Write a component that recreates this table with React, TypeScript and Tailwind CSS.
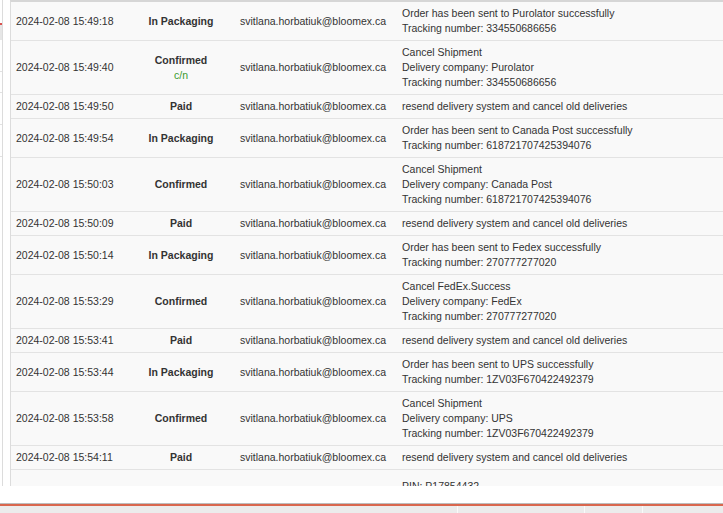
import React from "react";

type Row = { date: string; status: string; extra?: string; msg: string[]; email?: string; last?: boolean };

const EMAIL = "svitlana.horbatiuk@bloomex.ca";
const RESEND = ["resend delivery system and cancel old deliveries"];

const rows: Row[] = [
  { date: "2024-02-08 15:49:18", status: "In Packaging", msg: ["Order has been sent to Purolator successfully", "Tracking number: 334550686656"] },
  { date: "2024-02-08 15:49:40", status: "Confirmed", extra: "c/n", msg: ["Cancel Shipment", "Delivery company: Purolator", "Tracking number: 334550686656"] },
  { date: "2024-02-08 15:49:50", status: "Paid", msg: RESEND },
  { date: "2024-02-08 15:49:54", status: "In Packaging", msg: ["Order has been sent to Canada Post successfully", "Tracking number: 618721707425394076"] },
  { date: "2024-02-08 15:50:03", status: "Confirmed", msg: ["Cancel Shipment", "Delivery company: Canada Post", "Tracking number: 618721707425394076"] },
  { date: "2024-02-08 15:50:09", status: "Paid", msg: RESEND },
  { date: "2024-02-08 15:50:14", status: "In Packaging", msg: ["Order has been sent to Fedex successfully", "Tracking number: 270777277020"] },
  { date: "2024-02-08 15:53:29", status: "Confirmed", msg: ["Cancel FedEx.Success", "Delivery company: FedEx", "Tracking number: 270777277020"] },
  { date: "2024-02-08 15:53:41", status: "Paid", msg: RESEND },
  { date: "2024-02-08 15:53:44", status: "In Packaging", msg: ["Order has been sent to UPS successfully", "Tracking number: 1ZV03F670422492379"] },
  { date: "2024-02-08 15:53:58", status: "Confirmed", msg: ["Cancel Shipment", "Delivery company: UPS", "Tracking number: 1ZV03F670422492379"] },
  { date: "2024-02-08 15:54:11", status: "Paid", msg: RESEND },
  { date: "", status: "", email: "", msg: ["PIN: P17854432"], last: true },
];

export default function App() {
  return (
    <div
      className="w-[723px] h-[513px] bg-white overflow-hidden flex flex-col text-[#333]"
      style={{ fontFamily: '"Liberation Sans", Arial, sans-serif' }}
    >
      <div className="flex h-[486px]">
        <div className="w-[10px] shrink-0 flex">
          <div className="w-[3px] border-r border-[#dcdcdc] flex flex-col">
            <div className="h-[23px]" />
            <div className="h-[2px] bg-[#d9534f]" />
            <div className="h-[15px] bg-[#e6e6e6]" />
            <div className="h-[32px] border-b border-[#e2e2e2]" />
            <div className="h-[21px] border-b border-[#e2e2e2]" />
            <div className="h-[32px] border-b border-[#e2e2e2]" />
            <div className="h-[32px] border-b border-[#e2e2e2]" />
          </div>
        </div>
        <div className="flex-1 border-l border-[#dcdcdc] border-t-2 border-t-[#d6d6d6] bg-[#f9f9f9] overflow-hidden">
          <table className="border-collapse text-[10.5px] leading-[15px] w-[713px] table-fixed">
            <colgroup>
              <col className="w-[116px]" />
              <col className="w-[108px]" />
              <col className="w-[162px]" />
              <col />
            </colgroup>
            <tbody>
              {rows.map((r, i) => (
                <tr key={i} className={r.last ? "" : "border-b border-[#e3e3e3]"}>
                  <td className="align-middle pl-[5px] py-[4px] whitespace-nowrap">{r.date}</td>
                  <td className="align-middle text-center py-[4px] font-bold whitespace-nowrap">
                    <div>{r.status}</div>
                    {r.extra && <div className="font-normal text-[#3a9a2e]">{r.extra}</div>}
                  </td>
                  <td className="align-middle pl-[5px] py-[4px] whitespace-nowrap">{r.email ?? EMAIL}</td>
                  <td className={`align-middle pl-[5px] whitespace-nowrap ${r.last ? "pt-[9px] pb-[4px]" : "py-[4px]"}`}>
                    {r.msg.map((m, j) => (
                      <div key={j}>{m}</div>
                    ))}
                  </td>
                </tr>
              ))}
            </tbody>
          </table>
        </div>
      </div>
      <div className="h-[17px]" />
      <div className="flex-1 border-t border-[#bdbdbd] flex flex-col">
        <div className="h-[2px] bg-[#d9674e]" />
        <div className="flex-1 bg-[#ececec] flex">
          <div className="w-[458px] border-r border-[#fafafa]" />
          <div className="w-[127px] border-r border-[#fafafa]" />
          <div className="w-[58px] border-r border-[#fafafa]" />
          <div className="flex-1" />
        </div>
      </div>
    </div>
  );
}
